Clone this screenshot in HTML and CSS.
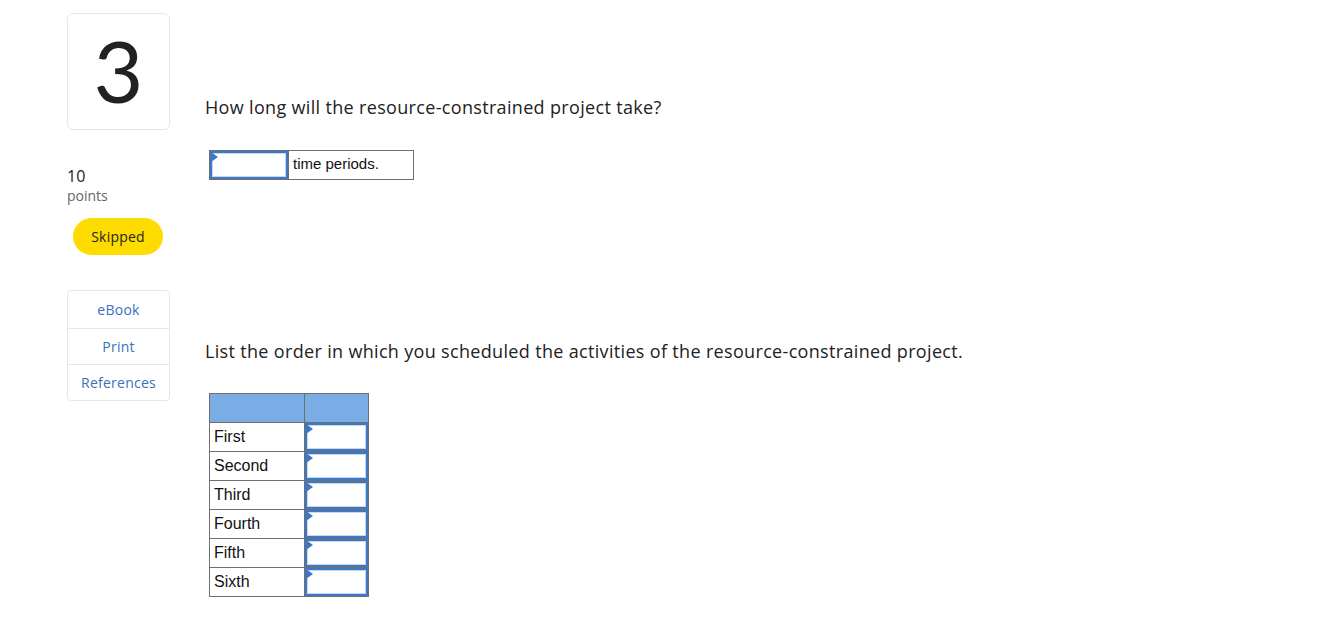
FILE: index.html
```html
<!DOCTYPE html>
<html>
<head>
<meta charset="utf-8">
<link rel="stylesheet" href="styles.css">
</head>
<body>
<div class="page">
  <aside class="side">
    <div class="qnum">3</div>
    <div class="points">
      <div class="pts-num">10</div>
      <div class="pts-label">points</div>
    </div>
    <div class="status">Skipped</div>
    <div class="links">
      <div class="link">eBook</div>
      <div class="link">Print</div>
      <div class="link">References</div>
    </div>
  </aside>
  <main class="content">
    <p class="prompt first">How long will the resource-constrained project take?</p>
    <table class="answer">
      <tr>
        <td class="inp-cell wide"><span class="field"><span class="flag"></span></span></td>
        <td class="unit">time periods.</td>
      </tr>
    </table>
    <p class="prompt second">List the order in which you scheduled the activities of the resource-constrained project.</p>
    <table class="order">
      <tr class="head"><th></th><th></th></tr>
      <tr><td class="lbl">First</td><td class="inp-cell"><span class="field"><span class="flag"></span></span></td></tr>
      <tr><td class="lbl">Second</td><td class="inp-cell"><span class="field"><span class="flag"></span></span></td></tr>
      <tr><td class="lbl">Third</td><td class="inp-cell"><span class="field"><span class="flag"></span></span></td></tr>
      <tr><td class="lbl">Fourth</td><td class="inp-cell"><span class="field"><span class="flag"></span></span></td></tr>
      <tr><td class="lbl">Fifth</td><td class="inp-cell"><span class="field"><span class="flag"></span></span></td></tr>
      <tr><td class="lbl">Sixth</td><td class="inp-cell"><span class="field"><span class="flag"></span></span></td></tr>
    </table>
  </main>
</div>
</body>
</html>
```

FILE: styles.css
```css
html, body {
  margin: 0;
  padding: 0;
  background: #fff;
}
body {
  font-family: "Open Sans", "Lato", "Liberation Sans", sans-serif;
  color: #222;
}
.page {
  display: flex;
  padding: 13px 0 0 67px;
}
.side {
  width: 103px;
  display: flex;
  flex-direction: column;
  align-items: stretch;
}
.qnum {
  box-sizing: border-box;
  height: 117px;
  border: 1px solid #e6e6e6;
  border-radius: 6px;
  display: flex;
  align-items: center;
  justify-content: center;
  font-family: "Lato", "Open Sans", sans-serif;
  font-size: 86px;
  font-weight: 400;
  color: #222;
  line-height: 1;
  padding-bottom: 4px;
}
.points {
  margin-top: 35px;
}
.pts-num {
  font-size: 16px;
  color: #222;
  line-height: 22px;
}
.pts-label {
  font-size: 14px;
  color: #666;
  line-height: 18px;
}
.status {
  margin: 13px 0 0 6px;
  width: 90px;
  height: 37px;
  border-radius: 19px;
  background: #ffdc00;
  font-size: 14px;
  letter-spacing: 0.2px;
  color: #222;
  display: flex;
  align-items: center;
  justify-content: center;
}
.links {
  margin-top: 35px;
  border: 1px solid #e6e6e6;
  border-radius: 4px;
  box-sizing: border-box;
}
.link {
  height: 35px;
  display: flex;
  align-items: center;
  justify-content: center;
  font-size: 14px;
  letter-spacing: 0.25px;
  color: #3a70be;
  border-top: 1px solid #e6e6e6;
}
.link:first-child {
  border-top: none;
  height: 37px;
}
.content {
  margin-left: 35px;
  padding-top: 82px;
}
.prompt {
  margin: 0;
  font-size: 18px;
  line-height: 24px;
  letter-spacing: 0.33px;
  color: #222;
}
.answer, .order {
  border-collapse: collapse;
  font-family: "Liberation Sans", Arial, sans-serif;
  color: #111;
}
.answer {
  margin: 31px 0 0 4px;
}
.answer td {
  border: 1px solid #6f6f6f;
  padding: 0;
  height: 28px;
}
.answer .wide {
  width: 78px;
}
.unit {
  width: 120px;
  font-size: 15px;
  padding: 0 0 0 4px !important;
  vertical-align: top;
  line-height: 26px;
}
.field {
  position: relative;
  display: block;
  box-sizing: border-box;
  height: 100%;
  border: 2px solid #3f77c0;
  box-shadow: inset 0 0 0 1px #c5d9f2;
  background: #fff;
}
.answer .field {
  height: 28px;
}
.flag {
  position: absolute;
  left: -1px;
  top: -1px;
  width: 0;
  height: 0;
  border-top: 5px solid transparent;
  border-bottom: 5px solid transparent;
  border-left: 7px solid #3f77c0;
}
.second {
  margin-top: 159px;
}
.order {
  margin: 30px 0 0 4px;
}
.order th {
  background: #7aade6;
  border: 1px solid #6f6f6f;
  height: 28px;
  padding: 0;
}
.order th:first-child { width: 94px; }
.order th:last-child { width: 63px; }
.order td {
  border: 1px solid #6f6f6f;
  height: 28px;
  padding: 0;
}
.lbl {
  font-size: 16px;
  padding-left: 4px !important;
  line-height: 28px;
}
.order .field {
  height: 28px;
}
```
